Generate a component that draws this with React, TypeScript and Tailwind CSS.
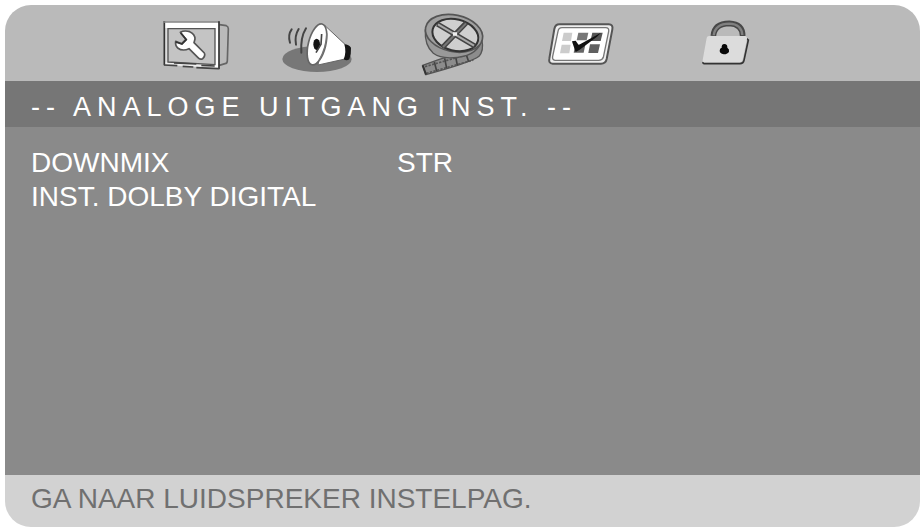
import React, { useState } from 'react';

const iconClass = 'block h-19 w-32';

function GeneralIcon() {
    return (
        <svg viewBox="-54 -15 384 228" className={iconClass} fill="none">
            <path
                d="M208 44 L229 47 Q235 49 235 56 L232 152 Q232 160 225 161 L208 166"
                stroke="#666"
                strokeWidth="5"
            />
            <path d="M41 36 H206 V175 L42 164 Z" fill="#c4c4c4" />
            <path d="M44 37 H206 V54 H44 Z" fill="#fff" />
            <path d="M44 54 H53 V162 H44 Z" fill="#ddd" />
            <path d="M195 37 H206 V174 H195 Z" fill="#fff" />
            <path d="M44 156 L195 164 V174 L44 164 Z" fill="#eee" />
            <path d="M54 56 H195 V164 L54 156 Z" stroke="#555" strokeWidth="4" />
            <path d="M43 33 V166" stroke="#333" strokeWidth="5" />
            <path d="M40 36 H208" stroke="#888" strokeWidth="4" />
            <path d="M207 34 V178" stroke="#333" strokeWidth="5" />
            <path
                d="M42 165 L82 167 M98 169 L130 171 M139 173 L206 176 M72 159 L139 162 M154 166 L194 168"
                stroke="#444"
                strokeWidth="5"
            />
            <path
                d="M91 67 Q103 60 119 65 Q135 72 135 87 L132 98 L163 129 Q167 137 158 146 Q150 150 144 143 L117 116 Q98 125 83 114 Q75 105 77 94 L95 101 L108 88 Z"
                fill="#fff"
                stroke="#555"
                strokeWidth="5"
                strokeLinejoin="round"
            />
            <path d="M77 96 L96 102 L109 89 L92 69" stroke="#333" strokeWidth="5" />
        </svg>
    );
}

function AudioIcon() {
    return (
        <svg viewBox="-30 -15 384 228" className={iconClass} fill="none">
            <ellipse cx="141" cy="147" rx="104" ry="39" fill="#777" />
            <path
                d="M65 58 Q53 74 60 98 M86 57 Q73 78 78 104 M108 55 Q91 82 94 128"
                stroke="#444"
                strokeWidth="6"
                strokeLinecap="round"
            />
            <path
                d="M164 46 L226 104 Q234 130 225 147 L144 165 Z"
                fill="#fff"
                stroke="#666"
                strokeWidth="3"
            />
            <path
                d="M223 103 Q237 104 243 113 Q244 133 238 148 Q230 154 221 148 Q230 126 223 103 Z"
                fill="#151515"
            />
            <ellipse
                cx="141"
                cy="103"
                rx="26"
                ry="63"
                transform="rotate(14 141 103)"
                fill="#fff"
                stroke="#666"
                strokeWidth="5"
            />
            <ellipse cx="140" cy="103" rx="10" ry="17" fill="#151515" />
            <path
                d="M155 72 L153 103 L138 128"
                stroke="#444"
                strokeWidth="5"
            />
            <path d="M170 70 Q170 112 146 153" stroke="#777" strokeWidth="4" />
        </svg>
    );
}

function VideoIcon() {
    return (
        <svg viewBox="-66 -15 384 228" className={iconClass} fill="none">
            <path
                d="M38 166 Q88 147 145 130 Q192 122 216 92 Q222 122 207 139 Q182 158 48 194 Z"
                fill="#8c8c8c"
                stroke="#555"
                strokeWidth="4"
            />
            <path
                d="M73 156 L80 183 M104 145 L110 175 M136 135 L142 166 M167 128 L176 155"
                stroke="#444"
                strokeWidth="5"
            />
            <path
                d="M45 170 L164 136 M49 190 L190 150"
                stroke="#555"
                strokeWidth="5"
                strokeDasharray="7 4"
            />
            <path d="M38 166 L48 194" stroke="#333" strokeWidth="6" />
            <path
                d="M46 60 Q43 106 70 130 Q94 148 142 142 Q206 136 217 84 L132 60 Z"
                fill="#999"
                stroke="#555"
                strokeWidth="4"
            />
            <ellipse
                cx="132"
                cy="70"
                rx="87"
                ry="55"
                transform="rotate(12 132 70)"
                fill="#a0a0a0"
                stroke="#555"
                strokeWidth="5"
            />
            <ellipse
                cx="136"
                cy="75"
                rx="70"
                ry="47"
                transform="rotate(14 136 75)"
                fill="#cfcfcf"
                stroke="#333"
                strokeWidth="6"
            />
            <path
                d="M82 42 L194 108 M169 38 L98 112"
                stroke="#444"
                strokeWidth="15"
            />
            <path d="M84 43 L192 107" stroke="#aaa" strokeWidth="6" />
            <path d="M168 40 L99 111" stroke="#777" strokeWidth="6" />
            <path d="M129 72 H141" stroke="#eee" strokeWidth="10" />
        </svg>
    );
}

function PreferenceIcon() {
    return (
        <svg viewBox="-72 -15 384 228" className={iconClass} fill="none">
            <path
                d="M58 43 H206 Q220 43 217 58 L200 147 Q197 161 183 161 H38 Q25 160 28 146 L43 57 Q46 43 58 43 Z"
                fill="#eee"
                stroke="#555"
                strokeWidth="6"
            />
            <path
                d="M66 53 H197 Q208 53 206 64 L190 142 Q187 151 176 151 H45 Q36 150 38 139 L54 64 Q56 53 66 53 Z"
                fill="#fff"
                stroke="#777"
                strokeWidth="4"
            />
            <path d="M71 68 H97 L93 93 H66 Z M65 104 H92 L88 130 H60 Z" fill="#ccc" />
            <path d="M115 68 H145 L140 91 H110 Z" fill="#777" />
            <path d="M157 68 H188 L182 93 H151 Z" fill="#555" />
            <path d="M106 104 H136 L131 128 H101 Z" fill="#666" />
            <path d="M150 103 H180 L174 129 H145 Z" fill="#606060" />
            <path
                d="M96 94 L107 92 L116 105 L183 68 L171 80 L119 119 L107 126 Q99 104 96 94 Z"
                fill="#111"
            />
        </svg>
    );
}

function PasswordIcon() {
    return (
        <svg viewBox="-138 -15 384 228" className={iconClass} fill="none">
            <path
                d="M70 78 Q73 40 118 40 Q158 42 158 78"
                stroke="#484848"
                strokeWidth="17"
            />
            <path
                d="M71 76 Q76 41 118 41 Q155 43 157 75"
                stroke="#808080"
                strokeWidth="7"
            />
            <path
                d="M170 86 L175 90 L162 151 Q160 161 150 161 H42 L37 157"
                stroke="#333"
                strokeWidth="5"
            />
            <path
                d="M57 78 H164 Q172 79 171 87 L158 149 Q156 157 148 157 H42 Q36 156 38 150 L50 84 Q51 78 57 78 Z"
                fill="#dcdcdc"
            />
            <path
                d="M103 102 Q113 102 112 113 Q119 117 117 125 Q114 132 101 133 Q89 130 89 122 Q89 115 95 113 Q94 103 103 102 Z"
                fill="#080808"
            />
        </svg>
    );
}

const pages = [
    { name: 'Algemeen', Icon: GeneralIcon },
    { name: 'Audio', Icon: AudioIcon },
    { name: 'Video', Icon: VideoIcon },
    { name: 'Voorkeuren', Icon: PreferenceIcon },
    { name: 'Wachtwoord', Icon: PasswordIcon },
];

const settings = [
    { label: 'DOWNMIX', value: 'STR' },
    { label: 'INST. DOLBY DIGITAL', value: '' },
];

export default function App() {
    const [page, setPage] = useState('Audio');

    return (
        <div className="flex min-h-screen bg-white pt-[5px] pr-px pb-1 pl-[5px] font-['Liberation_Sans',Arial,sans-serif] text-[28px] leading-[34px]">
            <main className="flex flex-1 flex-col overflow-hidden rounded-[26px] text-white">
                <nav className="flex bg-[#bababa] pl-[127px]">
                    {pages.map(({ name, Icon }) => (
                        <button
                            key={name}
                            type="button"
                            aria-label={name}
                            aria-pressed={page === name}
                            onClick={() => setPage(name)}
                        >
                            <Icon />
                        </button>
                    ))}
                </nav>
                <h1 className="bg-[#767676] px-[26px] pt-[9px] pb-[3px] text-[27px] tracking-[6px]">
                    -- ANALOGE UITGANG INST. --
                </h1>
                <div className="flex flex-1 flex-col bg-[#8a8a8a] px-[26px] pt-[19px]">
                    {settings.map(({ label, value }) => (
                        <button
                            key={label}
                            type="button"
                            className="flex text-left"
                        >
                            <span className="w-[366px]">{label}</span>
                            <span>{value}</span>
                        </button>
                    ))}
                </div>
                <footer className="bg-[#d2d2d2] px-[26px] pt-[7px] pb-[11px] text-[#707070]">
                    GA NAAR LUIDSPREKER INSTELPAG.
                </footer>
            </main>
        </div>
    );
}
